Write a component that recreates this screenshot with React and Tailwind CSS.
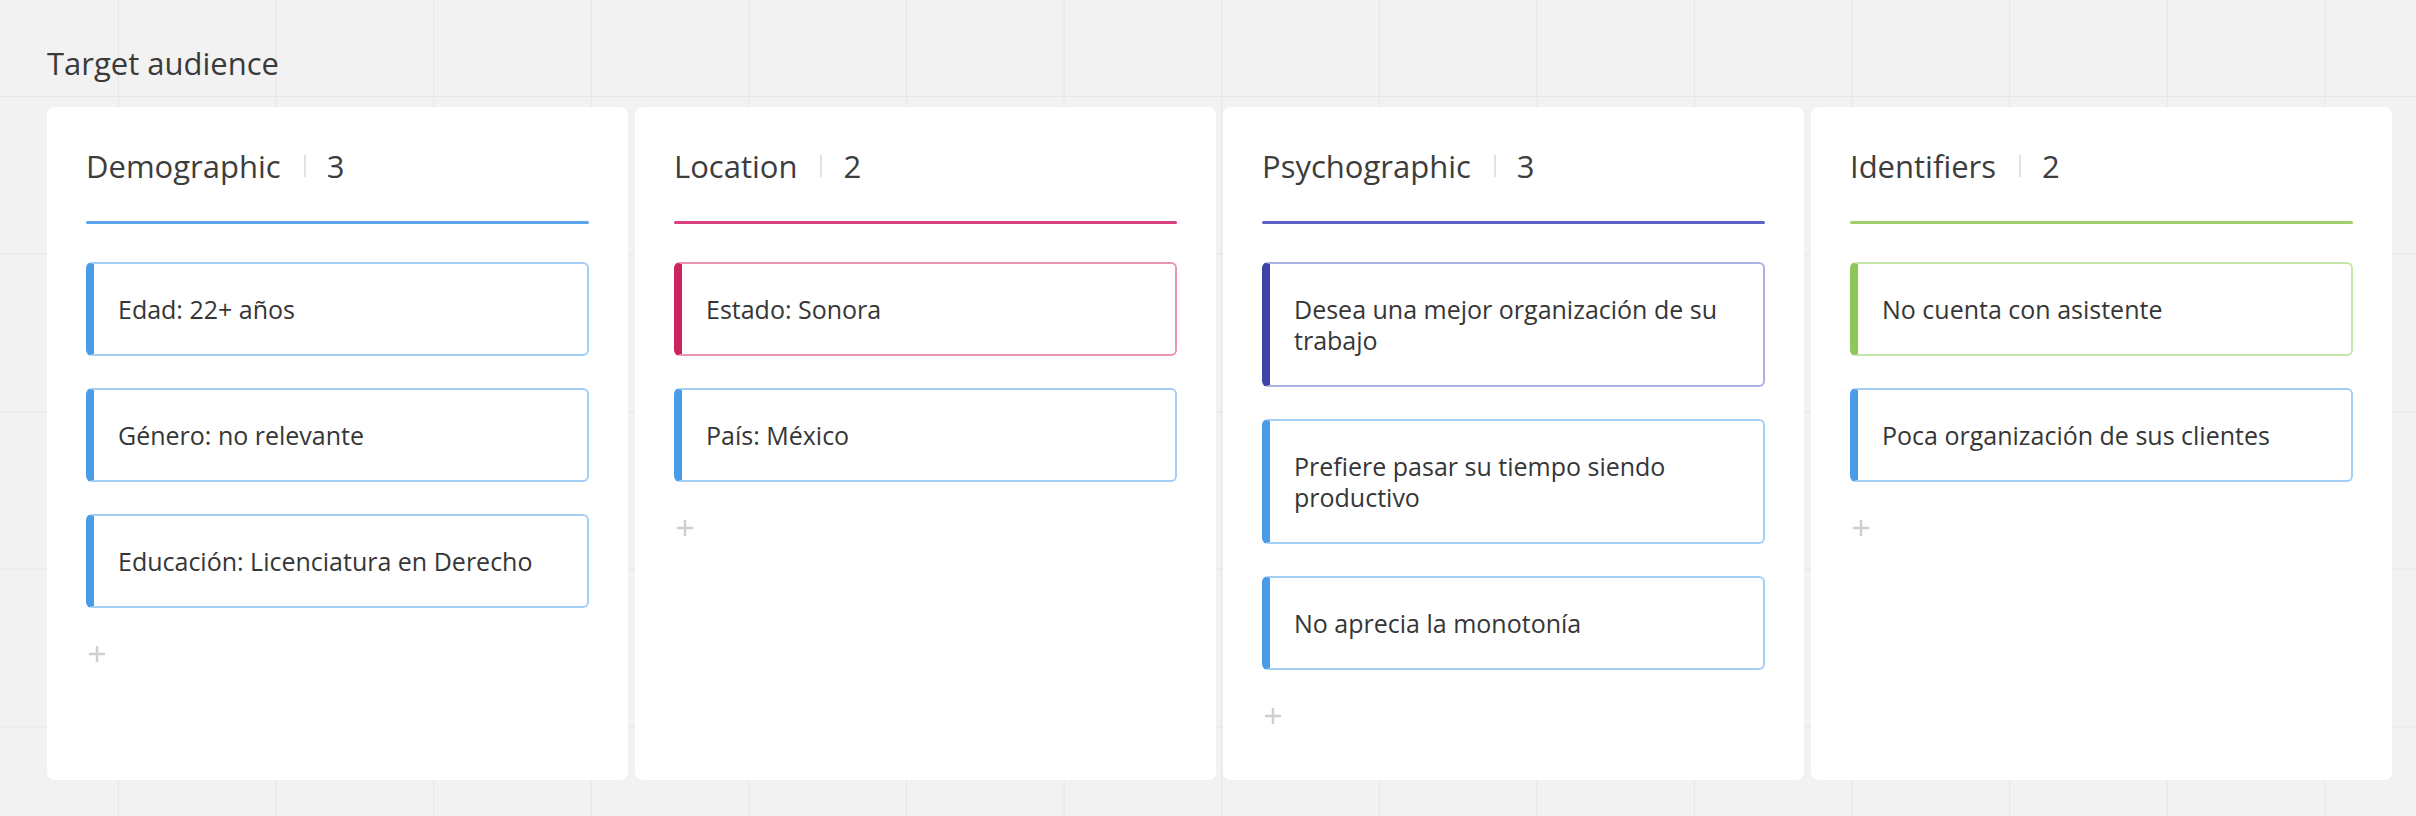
import React from 'react';

const BLUE = {
    accent: 'border-l-[#4a9be8]',
    border: 'border-[#a3cff7]',
};

const columns = [
    {
        title: 'Demographic',
        line: 'bg-[#5aa5ec]',
        items: [
            { text: 'Edad: 22+ años', ...BLUE },
            { text: 'Género: no relevante', ...BLUE },
            { text: 'Educación: Licenciatura en Derecho', ...BLUE },
        ],
    },
    {
        title: 'Location',
        line: 'bg-[#d7427f]',
        items: [
            { text: 'Estado: Sonora', accent: 'border-l-[#c9245f]', border: 'border-[#eb93b6]' },
            { text: 'País: México', ...BLUE },
        ],
    },
    {
        title: 'Psychographic',
        line: 'bg-[#5c63c6]',
        items: [
            { text: 'Desea una mejor organización de su trabajo', accent: 'border-l-[#3c45a7]', border: 'border-[#adb1e1]' },
            { text: 'Prefiere pasar su tiempo siendo productivo', ...BLUE },
            { text: 'No aprecia la monotonía', ...BLUE },
        ],
    },
    {
        title: 'Identifiers',
        line: 'bg-[#9dd06c]',
        items: [
            { text: 'No cuenta con asistente', accent: 'border-l-[#8dc75b]', border: 'border-[#c6e7a9]' },
            { text: 'Poca organización de sus clientes', ...BLUE },
        ],
    },
];

const PlusIcon = () => (
    <svg width="18" height="18" viewBox="0 0 18 18" fill="none">
        <path d="M9 1v16M1 9h16" stroke="#cfcfcf" strokeWidth="2.5" />
    </svg>
);

const Column = ({ title, line, items }) => (
    <div className="w-[581px] h-[673px] shrink-0 bg-white rounded-[8px] pt-[39px] pl-[39px] pr-[39px]">
        {/* Header */}
        <div className="flex items-center h-[40px] text-[31px] leading-[40px] text-[#3d3d3d]">
            <span>{title}</span>
            <span className="w-[2px] h-[22px] bg-[#e2e2e2] ml-[23px] mr-[21px]" />
            <span>{items.length}</span>
        </div>
        <div className={`h-[3px] rounded-full mt-[35px] ${line}`} />

        {/* Cards */}
        <div className="flex flex-col gap-[32px] mt-[38px]">
            {items.map((item) => (
                <div
                    key={item.text}
                    className={`border-2 border-l-[8px] rounded-[6px] pl-[24px] pr-[24px] py-[29.5px] text-[25px] leading-[31px] text-[#363636] ${item.border} ${item.accent}`}
                >
                    {item.text}
                </div>
            ))}
        </div>

        <div className="mt-[37px] ml-[2px]">
            <PlusIcon />
        </div>
    </div>
);

export default function App() {
    return (
        <div
            className="w-[2416px] h-[816px] overflow-hidden bg-[#f2f2f2] bg-[linear-gradient(to_right,#e6e6e6_1px,transparent_1px),linear-gradient(to_bottom,#e6e6e6_1px,transparent_1px)] bg-[size:157.6px_157.6px] bg-[position:118px_96px] pl-[47px] pt-[43px]"
            style={{ fontFamily: '"Open Sans", "Noto Sans", sans-serif' }}
        >
            <div className="h-[40px] leading-[40px] text-[31px] text-[#3a3a3a]">Target audience</div>
            <div className="flex gap-[7px] mt-[24px]">
                {columns.map((col) => (
                    <Column key={col.title} {...col} />
                ))}
            </div>
        </div>
    );
}
